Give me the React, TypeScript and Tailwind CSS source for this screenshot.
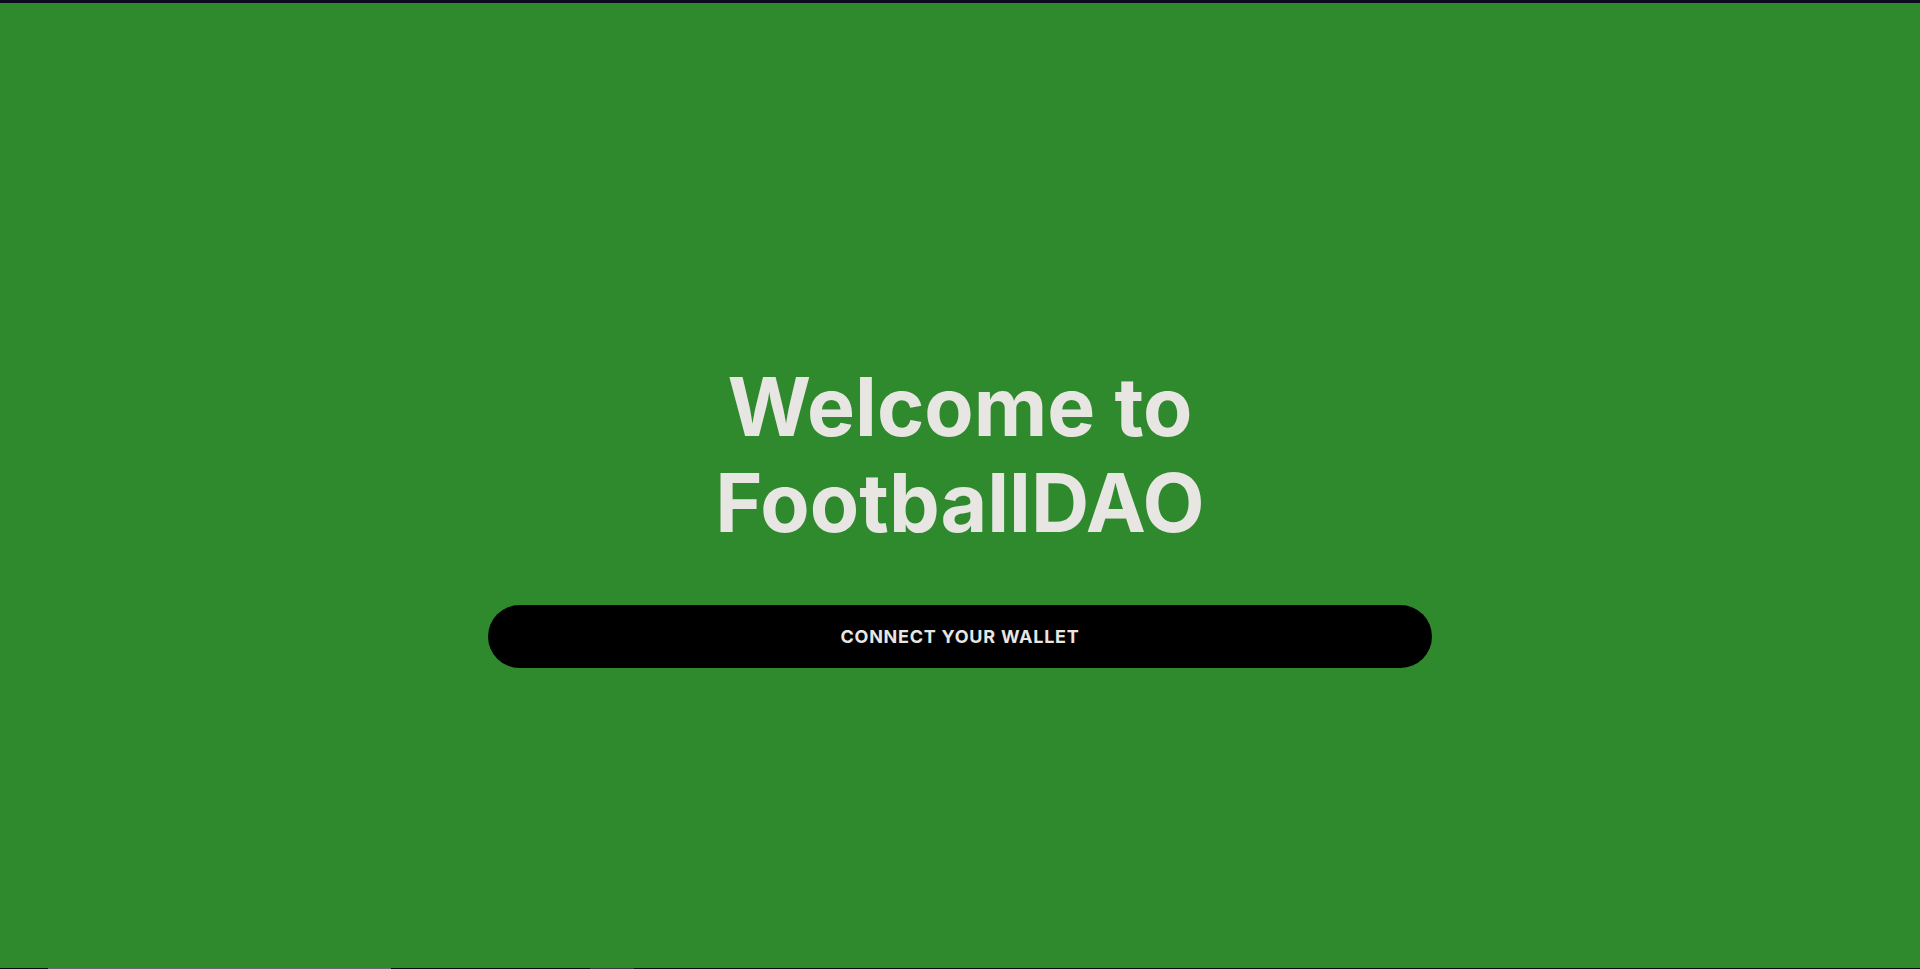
import React from "react";

export default function App() {
  return (
    <div
      className="flex h-[969px] w-full flex-col overflow-hidden bg-[#2f892d]"
      style={{ fontFamily: "Inter, 'Noto Sans', sans-serif" }}
    >
      <div className="h-[3px] w-full shrink-0 bg-[#0c0b1b]" />
      <main className="flex flex-1 flex-col items-center pt-[356px]">
        <h1 className="text-center text-[80.6px] font-bold leading-[96px] text-[#e8e6e3]">
          Welcome to
          <br />
          FootballDAO
        </h1>
        <button
          type="button"
          className="mt-[54px] flex h-[63px] w-[944px] items-center justify-center rounded-full bg-black text-[18px] font-bold tracking-[0.75px] text-[#e8e6e3]"
        >
          CONNECT YOUR WALLET
        </button>
      </main>
      <div className="relative h-[1px] w-full shrink-0 bg-[#0c0c0c]">
        <div className="absolute left-[48px] top-0 h-[1px] w-[343px] bg-[#6b6b6b]" />
        <div className="absolute left-[590px] top-0 h-[1px] w-[44px] bg-[#3a3a3a]" />
      </div>
    </div>
  );
}
